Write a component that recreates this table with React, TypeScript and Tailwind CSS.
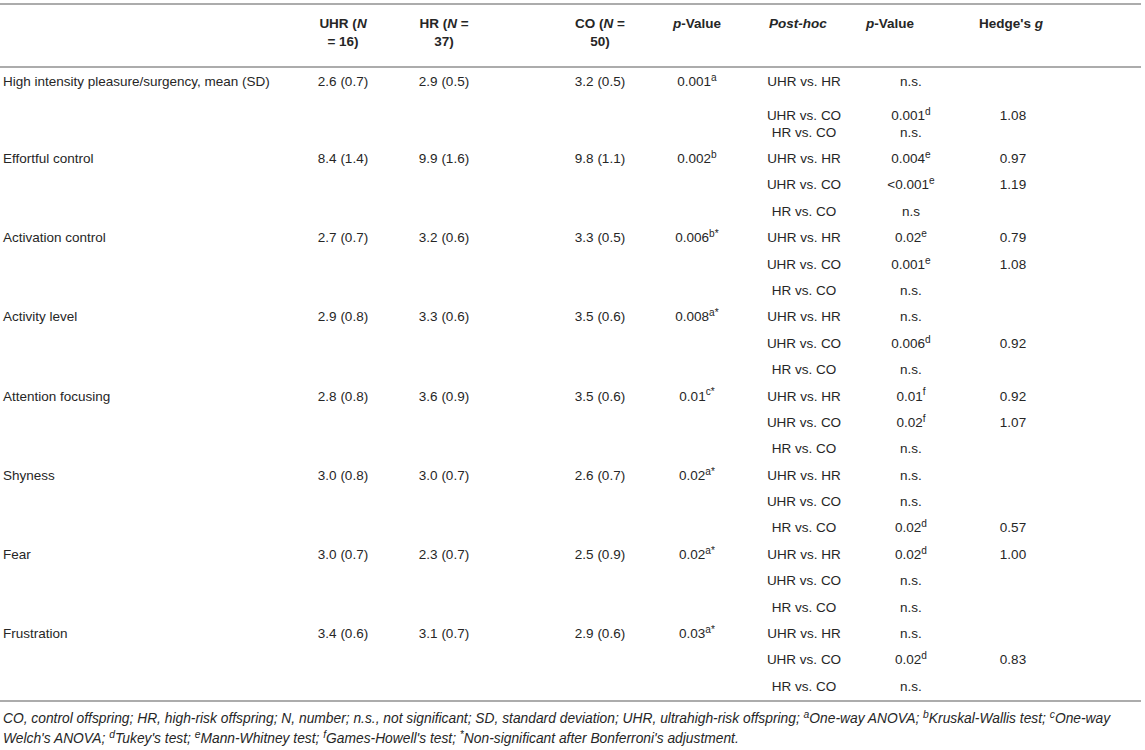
import React from "react";

type Val = [string, string?];

type Group = {
    label: string;
    uhr: string;
    hr: string;
    co: string;
    p: Val;
    post: [string, Val, string][];
};

const groups: Group[] = [
    {
        label: "High intensity pleasure/surgency, mean (SD)", uhr: "2.6 (0.7)", hr: "2.9 (0.5)", co: "3.2 (0.5)", p: ["0.001", "a"],
        post: [["UHR vs. HR", ["n.s."], ""], ["UHR vs. CO", ["0.001", "d"], "1.08"], ["HR vs. CO", ["n.s."], ""]]
    },
    {
        label: "Effortful control", uhr: "8.4 (1.4)", hr: "9.9 (1.6)", co: "9.8 (1.1)", p: ["0.002", "b"],
        post: [["UHR vs. HR", ["0.004", "e"], "0.97"], ["UHR vs. CO", ["<0.001", "e"], "1.19"], ["HR vs. CO", ["n.s"], ""]]
    },
    {
        label: "Activation control", uhr: "2.7 (0.7)", hr: "3.2 (0.6)", co: "3.3 (0.5)", p: ["0.006", "b*"],
        post: [["UHR vs. HR", ["0.02", "e"], "0.79"], ["UHR vs. CO", ["0.001", "e"], "1.08"], ["HR vs. CO", ["n.s."], ""]]
    },
    {
        label: "Activity level", uhr: "2.9 (0.8)", hr: "3.3 (0.6)", co: "3.5 (0.6)", p: ["0.008", "a*"],
        post: [["UHR vs. HR", ["n.s."], ""], ["UHR vs. CO", ["0.006", "d"], "0.92"], ["HR vs. CO", ["n.s."], ""]]
    },
    {
        label: "Attention focusing", uhr: "2.8 (0.8)", hr: "3.6 (0.9)", co: "3.5 (0.6)", p: ["0.01", "c*"],
        post: [["UHR vs. HR", ["0.01", "f"], "0.92"], ["UHR vs. CO", ["0.02", "f"], "1.07"], ["HR vs. CO", ["n.s."], ""]]
    },
    {
        label: "Shyness", uhr: "3.0 (0.8)", hr: "3.0 (0.7)", co: "2.6 (0.7)", p: ["0.02", "a*"],
        post: [["UHR vs. HR", ["n.s."], ""], ["UHR vs. CO", ["n.s."], ""], ["HR vs. CO", ["0.02", "d"], "0.57"]]
    },
    {
        label: "Fear", uhr: "3.0 (0.7)", hr: "2.3 (0.7)", co: "2.5 (0.9)", p: ["0.02", "a*"],
        post: [["UHR vs. HR", ["0.02", "d"], "1.00"], ["UHR vs. CO", ["n.s."], ""], ["HR vs. CO", ["n.s."], ""]]
    },
    {
        label: "Frustration", uhr: "3.4 (0.6)", hr: "3.1 (0.7)", co: "2.9 (0.6)", p: ["0.03", "a*"],
        post: [["UHR vs. HR", ["n.s."], ""], ["UHR vs. CO", ["0.02", "d"], "0.83"], ["HR vs. CO", ["n.s."], ""]]
    },
];

// first group in the source is laid out unevenly
const firstHeights = ["h-[34px] leading-[26px]", "h-[17px] leading-[26px]", "h-[26px] leading-[26px]"];
const rowHeight = "h-[26.4px] leading-[26.4px]";

const gridCols = "grid grid-cols-[298px_101px_156px_97px_107px_107px_102px_1fr]";

const V = ({v}: { v: Val }) => (
    <>
        {v[0]}
        {v[1] && <sup>{v[1]}</sup>}
    </>
);

const Cell = ({children, w = "w-[90px]"}: { children?: React.ReactNode; w?: string }) => (
    <div><div className={`${w} text-center whitespace-nowrap`}>{children}</div></div>
);

export default function App() {
    return (
        <div className="w-[1145px] h-[750px] bg-white text-[#262626] text-[13.5px]"
             style={{fontFamily: '"Liberation Sans", Arial, sans-serif'}}>
            <div className="w-[1141px] pt-[3px]">
                {/* header */}
                <div className={`${gridCols} border-t-2 border-b-2 border-[#acacac] pt-[10px] pb-[15px] leading-[18px] font-bold`}>
                    <div/>
                    <Cell>UHR (<i>N</i><br/>= 16)</Cell>
                    <Cell>HR (<i>N</i> =<br/>37)</Cell>
                    <Cell>CO (<i>N</i> =<br/>50)</Cell>
                    <Cell><i>p</i>-Value</Cell>
                    <Cell w="w-[78px]"><i>Post-hoc</i></Cell>
                    <Cell w="w-[48px]"><i>p</i>-Value</Cell>
                    <Cell w="w-[86px]">Hedge&apos;s <i>g</i></Cell>
                    <div/>
                </div>

                {/* body */}
                <div className="pt-[1px] border-b-2 border-[#acacac]">
                    {groups.map((g, gi) => g.post.map((p, pi) => (
                        <div key={`${gi}-${pi}`} className={`${gridCols} ${gi === 0 ? firstHeights[pi] : rowHeight}`}>
                            {pi === 0 ? (
                                <>
                                    <div className="pl-[3px] whitespace-nowrap">{g.label}</div>
                                    <Cell>{g.uhr}</Cell>
                                    <Cell>{g.hr}</Cell>
                                    <Cell>{g.co}</Cell>
                                    <Cell><V v={g.p}/></Cell>
                                </>
                            ) : (
                                <>
                                    <div/>
                                    <div/>
                                    <div/>
                                    <div/>
                                    <div/>
                                </>
                            )}
                            <Cell>{p[0]}</Cell>
                            <Cell><V v={p[1]}/></Cell>
                            <Cell>{p[2]}</Cell>
                            <div/>
                        </div>
                    )))}
                </div>

                {/* footnote */}
                <div className="pt-[7px] pl-[3px] italic text-[13.8px] leading-[20px] whitespace-nowrap">
                    CO, control offspring; HR, high-risk offspring; N, number; n.s., not significant; SD, standard deviation; UHR, ultrahigh-risk offspring; <sup>a</sup>One-way ANOVA; <sup>b</sup>Kruskal-Wallis test; <sup>c</sup>One-way
                    <br/>
                    Welch&apos;s ANOVA; <sup>d</sup>Tukey&apos;s test; <sup>e</sup>Mann-Whitney test; <sup>f</sup>Games-Howell&apos;s test; <sup>*</sup>Non-significant after Bonferroni&apos;s adjustment.
                </div>
            </div>
        </div>
    );
}
